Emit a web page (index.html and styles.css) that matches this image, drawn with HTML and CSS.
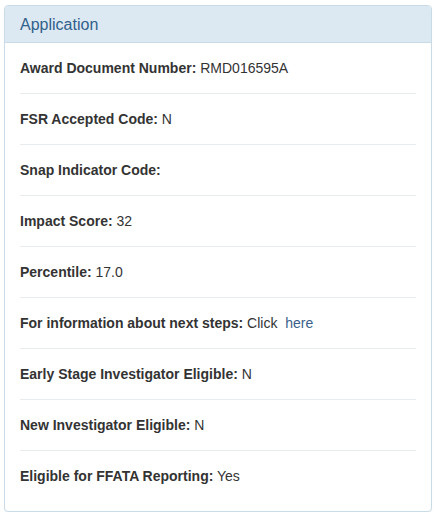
FILE: index.html
```html
<!DOCTYPE html>
<html>
<head>
<meta charset="utf-8">
<link rel="stylesheet" href="styles.css">
</head>
<body>
<div class="panel">
  <div class="panel-heading">Application</div>
  <div class="panel-body">
    <div class="row"><b>Award Document Number:</b> RMD016595A</div>
    <div class="row"><b>FSR Accepted Code:</b> N</div>
    <div class="row"><b>Snap Indicator Code:</b></div>
    <div class="row"><b>Impact Score:</b> 32</div>
    <div class="row"><b>Percentile:</b> 17.0</div>
    <div class="row"><b>For information about next steps:</b> Click&nbsp; <a href="#">here</a></div>
    <div class="row"><b>Early Stage Investigator Eligible:</b> N</div>
    <div class="row"><b>New Investigator Eligible:</b> N</div>
    <div class="row"><b>Eligible for FFATA Reporting:</b> Yes</div>
  </div>
</div>
</body>
</html>
```
FILE: styles.css
```css
html, body {
  margin: 0;
  padding: 0;
  background: #fff;
}
body {
  padding: 5px 15px 0 4px;
  font-family: "Liberation Sans", Arial, sans-serif;
  font-size: 14px;
  line-height: 20px;
  color: #333;
}
.panel {
  width: 426px;
  border: 1px solid #c9dbe7;
  border-radius: 4px;
  background: #fff;
  box-shadow: 0 1px 1px rgba(0,0,0,0.05);
}
.panel-heading {
  background: #dce9f3;
  color: #31608a;
  font-size: 16px;
  line-height: 18px;
  padding: 10px 15px 8px 15px;
  border-bottom: 1px solid #c9dbe7;
  border-radius: 3px 3px 0 0;
}
.panel-body {
  padding: 0 15px 10px 15px;
}
.row {
  padding: 15px 0 15px 0;
  border-bottom: 1px solid #e8ecef;
}
.row:last-child {
  border-bottom: none;
}
.row b {
  font-weight: bold;
  color: #333;
}
.row a {
  color: #3a5f8a;
  text-decoration: none;
}
```
